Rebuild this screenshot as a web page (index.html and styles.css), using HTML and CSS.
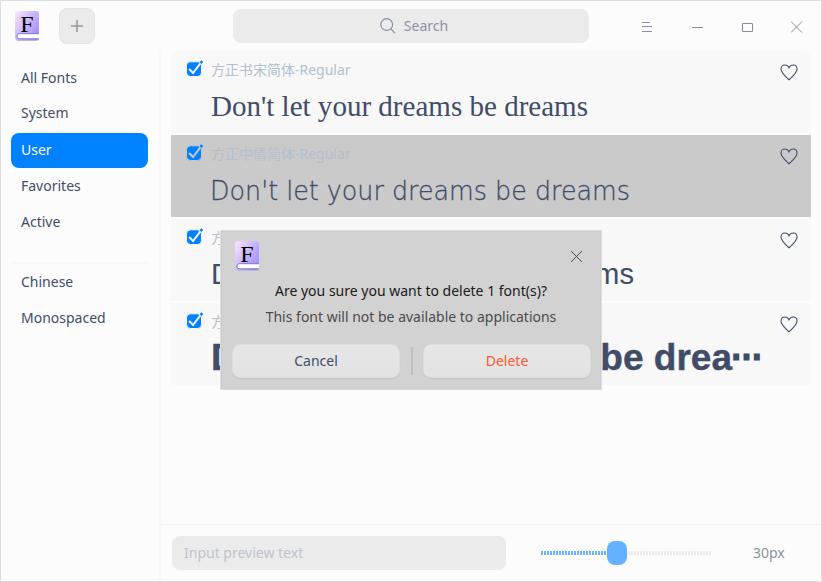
FILE: index.html
```
<!DOCTYPE html>
<html lang="en">
<head>
<meta charset="utf-8">
<title>Font Manager</title>
<link rel="stylesheet" href="styles.css">
</head>
<body>
<svg width="0" height="0" class="defs">
  <defs>
    <linearGradient id="logoFill" x1="0" y1="0" x2="1" y2="0.8">
      <stop offset="0" stop-color="#fde6fb"/><stop offset="0.5" stop-color="#cdb9fc"/><stop offset="1" stop-color="#9f8cfb"/>
    </linearGradient>
    <symbol id="logo" viewBox="0 0 24 31">
      <rect x="0.5" y="3" width="23.5" height="27" rx="3" fill="#bdb8cf"/>
      <rect x="0" y="0" width="24" height="29" rx="3" fill="url(#logoFill)"/>
      <path d="M24 22.700H4a2.600 2.600 0 0 0 0 5.100h20" fill="#fff" stroke="#8578cb" stroke-width="1"/>
      <text x="12" y="20.700" text-anchor="middle" class="logo-letter">F</text>
    </symbol>
    <symbol id="check" viewBox="0 0 18 18">
      <rect x="0" y="1.500" width="16" height="15.500" rx="4.500" fill="#0081ff" opacity="0.2"/>
      <rect x="0.500" y="1.800" width="15" height="14.700" rx="4" fill="#0081ff"/>
      <path class="tick" d="M3.100 9l4 4L14.500 3.200" fill="none" stroke-width="2"/>
      <path d="M14.500 3.200l1.800-2.100" stroke="#0081ff" stroke-width="2.600"/>
    </symbol>
    <symbol id="heart" viewBox="0 0 18 17">
      <path d="M9 15.800C6 12.800 1 9 1 5 1 2.500 2.600 1 4.600 1 6.800 1 8.200 2 9 3.800 9.800 2 11.200 1 13.400 1 15.400 1 17 2.500 17 5c0 4-5 7.800-8 10.800z" fill="none" stroke="#414d68" stroke-width="1.100"/>
    </symbol>
  </defs>
</svg>
<div class="window">
  <header class="titlebar">
    <svg class="logo"><use href="#logo"/></svg>
    <div class="add"><svg width="12" height="12"><path d="M6 0v12M0 6h12" stroke="#939ba7" stroke-width="1.600"/></svg></div>
    <div class="search">
      <svg width="16" height="16" fill="none" stroke="#8b92a1" stroke-width="1.200"><circle cx="6.700" cy="6.500" r="5.900"/><path d="M10.800 10.800l4.300 4.300"/></svg>
      <span>Search</span>
    </div>
    <div class="controls">
      <svg width="12" height="12"><path d="M1 1.500h8M1 5.500h10M1 10.500h10"/></svg>
      <svg width="12" height="12"><path d="M1 6.500h11"/></svg>
      <svg width="12" height="12"><path d="M1.500 2.500h10v8h-10z"/></svg>
      <svg width="12" height="12"><path d="M0 .5l11 11M11 .5l-11 11"/></svg>
    </div>
  </header>
  <div class="body">
    <nav class="sidebar">
      <div class="item">All Fonts</div>
      <div class="item second">System</div>
      <div class="item active">User</div>
      <div class="item">Favorites</div>
      <div class="item">Active</div>
      <div class="separator"></div>
      <div class="item">Chinese</div>
      <div class="item">Monospaced</div>
    </nav>
    <main class="main">
      <section class="list">
        <article class="row">
          <svg class="check"><use href="#check"/></svg>
          <div class="text"><div class="name">方正书宋简体-Regular</div>
            <svg class="preview"><text x="0" y="34" class="serif" textLength="377" lengthAdjust="spacingAndGlyphs">Don't let your dreams be dreams</text></svg></div>
          <svg class="heart"><use href="#heart"/></svg>
        </article>
        <article class="row selected">
          <svg class="check"><use href="#check"/></svg>
          <div class="text"><div class="name">方正中倩简体-Regular</div>
            <svg class="preview"><text x="-1" y="34" class="thin" textLength="420" lengthAdjust="spacingAndGlyphs">Don't let your dreams be dreams</text></svg></div>
          <svg class="heart"><use href="#heart"/></svg>
        </article>
        <article class="row">
          <svg class="check"><use href="#check"/></svg>
          <div class="text"><div class="name">方正黑体简体-Regular</div>
            <svg class="preview"><text x="0" y="34" class="sans" textLength="423" lengthAdjust="spacingAndGlyphs">Don't let your dreams be dreams</text></svg></div>
          <svg class="heart"><use href="#heart"/></svg>
        </article>
        <article class="row">
          <svg class="check"><use href="#check"/></svg>
          <div class="text"><div class="name">方正大黑简体-Regular</div>
            <svg class="preview"><text x="0" y="36" class="bold" textLength="521" lengthAdjust="spacingAndGlyphs">Don't let your dreams be drea</text><text x="520" y="35" class="bold dots" textLength="31" lengthAdjust="spacingAndGlyphs">⋯</text></svg></div>
          <svg class="heart"><use href="#heart"/></svg>
        </article>
      </section>
      <footer class="footer">
        <div class="input">Input preview text</div>
        <div class="slider"><div class="filled"></div><div class="thumb"></div><div class="rest"></div></div>
        <div class="size">30px</div>
      </footer>
    </main>
  </div>
</div>
<div class="dialog">
  <div class="dialog-head">
    <svg class="logo"><use href="#logo"/></svg>
    <svg class="close" width="12" height="12"><path d="M0 1l11 11M11 1l-11 11"/></svg>
  </div>
  <div class="question">Are you sure you want to delete 1 font(s)?</div>
  <div class="note">This font will not be available to applications</div>
  <div class="actions">
    <div class="button">Cancel</div>
    <div class="divider"></div>
    <div class="button warn">Delete</div>
  </div>
</div>
</body>
</html>
```
FILE: styles.css
```
* { box-sizing: border-box; }
body { margin: 0; font: 14px/20px "Noto Sans", "Noto Sans CJK SC", sans-serif; color: #414d68; overflow: hidden; }
svg { display: block; flex: none; }
.defs { position: absolute; }
.window { width: 822px; height: 582px; background: #fcfcfc; border: 1px solid #dddddd; display: flex; flex-direction: column; }
.titlebar { height: 50px; flex: none; display: flex; align-items: flex-start; padding-left: 14px; }
.logo { width: 24px; height: 31px; }
.titlebar .logo { margin-top: 10px; }
.logo-letter { font: 24px "Liberation Serif", serif; fill: #000; stroke: none; }
.add { width: 36px; height: 36px; margin: 7px 0 0 20px; border-radius: 8px; background: #ebebeb; border: 1px solid #e4e4e4; display: flex; align-items: center; justify-content: center; }
.search { width: 356px; height: 34px; margin: 8px 0 0 138px; border-radius: 8px; background: #ebebeb; color: #8b92a1; display: flex; align-items: center; justify-content: center; gap: 8px; padding-left: 6px; }
.controls { display: flex; gap: 38px; margin: 20px 0 0 52px; }
.controls svg { stroke: #868da0; fill: none; stroke-width: 1; }
.body { flex: 1; display: flex; min-height: 0; }
.sidebar { width: 160px; flex: none; border-right: 2px solid #f8f8f8; padding: 10px 11px 0 10px; }
.item { height: 35px; padding: 7px 10px; margin-bottom: 1px; }
.item.second { margin-top: -1px; }
.item.active { background: #0081ff; color: #fff; border-radius: 8px; margin-top: 2px; }
.separator { height: 2px; background: #f8f8f8; margin: 22px 0 1px; }
.main { flex: 1; display: flex; flex-direction: column; min-width: 0; }
.list { flex: 1; display: flex; flex-direction: column; gap: 2px; padding: 0 10px; }
.row { height: 82px; display: flex; background: #f8f8f8; padding-left: 15px; }
.row:first-child { border-radius: 8px 8px 0 0; }
.row.selected { background: #cacaca; }
.check { width: 18px; height: 18px; margin-top: 9px; stroke: #f8f8f8; }
.selected .check { stroke: #cacaca; }
.text { width: 576px; padding: 9px 0 0 7px; }
.name { height: 20px; color: #b3c0cd; white-space: nowrap; }
.preview { width: 552px; height: 46px; margin-top: 2px; overflow: visible; }
.preview text { fill: #414d68; }
.serif { font: 29.5px "Liberation Serif", serif; }
.thin { font: 200 26px "DejaVu Sans Light", "DejaVu Sans", sans-serif; stroke: #414d68; stroke-width: .3px; }
.sans { font: 30px "Liberation Sans", sans-serif; }
.bold { font: bold 36px "Liberation Sans", sans-serif; stroke: #414d68; stroke-width: .4px; }
.dots { stroke-width: 2px; }
.heart { width: 18px; height: 17px; margin: 13px 0 0; }
.footer { height: 57px; flex: none; border-top: 1px solid #f0f0f0; display: flex; align-items: center; padding-left: 11px; }
.input { width: 334px; height: 34px; border-radius: 8px; background: #ebebeb; color: #bfc3cd; padding: 7px 12px; }
.slider { display: flex; align-items: center; margin-left: 35px; }
.filled, .rest { height: 4px; }
.filled { width: 66px; background: repeating-linear-gradient(90deg, #66b3ff 0 2px, #fcfcfc 2px 3px); }
.thumb { width: 20px; height: 24px; border-radius: 8px; background: #66b1ff; }
.rest { width: 84px; margin-left: 1px; background: repeating-linear-gradient(90deg, #ebebeb 0 2px, #fcfcfc 2px 3px); }
.size { margin-left: 41px; color: #8b92a1; }
.dialog { position: absolute; left: 220px; top: 230px; width: 382px; height: 160px; background: #d2d2d2; border: 1px solid #dedede; box-shadow: inset 0 0 0 1px #cdcdcd; padding: 10px 10px 0 11px; }
.dialog-head { display: flex; justify-content: space-between; height: 39px; padding: 0 8px 0 3px; }
.close { margin-top: 9px; stroke: #414d68; }
.question, .note { text-align: center; margin-right: 1px; }
.question { color: #1a1a1a; margin-top: 1px; }
.note { color: #4b4b4b; margin-top: 6px; }
.actions { display: flex; justify-content: space-between; align-items: center; margin-top: 17px; }
.button { width: 168px; height: 34px; border-radius: 8px; background: linear-gradient(#e6e6e6, #e3e3e3); border: 1px solid #dcdcdc; box-shadow: 0 1px 1px #c4c4c4; text-align: center; padding-top: 6px; }
.warn { color: #ff5736; }
.divider { width: 2px; height: 28px; background: #bfbfbf; }
```
